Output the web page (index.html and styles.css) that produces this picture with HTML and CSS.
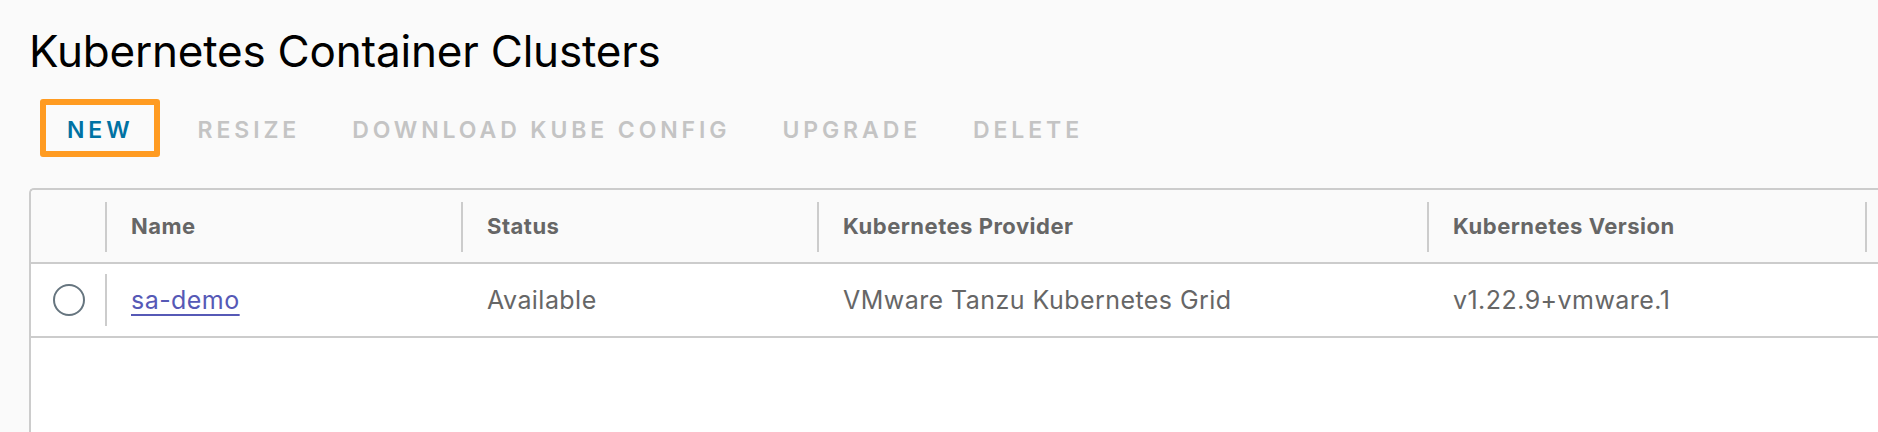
FILE: index.html
```html
<!DOCTYPE html>
<html lang="en">
<head>
<meta charset="utf-8">
<title>Kubernetes Container Clusters</title>
<link rel="stylesheet" href="styles.css">
</head>
<body>
<main class="page">
  <h1 class="title">Kubernetes Container Clusters</h1>
  <div class="toolbar">
    <button class="btn btn-primary">NEW</button>
    <div class="btn-group">
      <button class="btn" disabled>RESIZE</button>
      <button class="btn" disabled>DOWNLOAD KUBE CONFIG</button>
      <button class="btn" disabled>UPGRADE</button>
      <button class="btn" disabled>DELETE</button>
    </div>
  </div>
  <div class="grid">
    <div class="row head">
      <div class="cell sel"></div>
      <div class="cell c-name sep">Name</div>
      <div class="cell c-status sep">Status</div>
      <div class="cell c-provider sep">Kubernetes Provider</div>
      <div class="cell c-version sep">Kubernetes Version</div>
      <div class="cell c-rest sep"></div>
    </div>
    <div class="row body">
      <div class="cell sel"><span class="radio"></span></div>
      <div class="cell c-name sep"><a class="link" href="#">sa-demo</a></div>
      <div class="cell c-status">Available</div>
      <div class="cell c-provider">VMware Tanzu Kubernetes Grid</div>
      <div class="cell c-version">v1.22.9+vmware.1</div>
      <div class="cell c-rest"></div>
    </div>
  </div>
</main>
</body>
</html>
```
FILE: styles.css
```css
html, body {
  margin: 0;
  padding: 0;
  background: #fafafa;
  overflow: hidden;
  height: 100%;
}
.page {
  font-family: Inter, "Liberation Sans", sans-serif;
  padding: 23px 0 0 29px;
  width: 1920px;
}
.title {
  margin: 0;
  font-size: 44px;
  line-height: 56px;
  font-weight: 400;
  color: #000;
  letter-spacing: -0.2px;
}
.toolbar {
  display: flex;
  align-items: center;
  margin-top: 20px;
  margin-left: 11px;
}
.btn-group {
  display: flex;
  margin-left: 10px;
}
.btn {
  font-family: Inter, "Liberation Sans", sans-serif;
  font-size: 23px;
  font-weight: 600;
  letter-spacing: 3.9px;
  background: none;
  border: none;
  margin: 0;
  padding: 4px 24px 0 28px;
  line-height: 42px;
  height: 58px;
  color: #c4c4c4;
  cursor: default;
}
.btn-primary {
  color: #0072a3;
  border: 6px solid #ff9b21;
  border-radius: 3px;
  padding: 4px 20px 0 21px;
  height: 58px;
  box-sizing: border-box;
  line-height: 40px;
}
.grid {
  margin-top: 31px;
  border-top: 2px solid #cccccc;
  border-left: 2px solid #cccccc;
  border-top-left-radius: 5px;
  background: #fff;
  min-height: 400px;
}
.row {
  display: flex;
  height: 72px;
  border-bottom: 2px solid #cccccc;
}
.row.head {
  background: #fafafa;
  border-top-left-radius: 4px;
  font-size: 22px;
  font-weight: 700;
  color: #666;
  letter-spacing: 0.5px;
  line-height: 72px;
}
.row.body {
  font-size: 25px;
  font-weight: 400;
  color: #666;
  letter-spacing: 0.45px;
  line-height: 72px;
}
.cell {
  position: relative;
  box-sizing: border-box;
  padding-left: 26px;
  white-space: nowrap;
}
.sel {
  width: 74px;
  padding-left: 0;
  display: flex;
  align-items: center;
  justify-content: center;
}
.c-name, .c-status { width: 356px; }
.c-provider { width: 610px; }
.c-version { width: 438px; }
.c-rest { flex: 1; }
.sep::before {
  content: "";
  position: absolute;
  left: 0;
  top: 12px;
  width: 2px;
  height: 50px;
  background: #cccccc;
}
.body .sep::before {
  top: 10px;
  height: 52px;
}
.radio {
  display: block;
  width: 32px;
  height: 32px;
  box-sizing: border-box;
  border: 2px solid #66757f;
  border-radius: 50%;
  background: #fff;
  margin-left: 2px;
}
.link {
  color: #5659b6;
  text-decoration: underline;
  text-decoration-thickness: 2px;
  text-underline-offset: 5px;
}
```
